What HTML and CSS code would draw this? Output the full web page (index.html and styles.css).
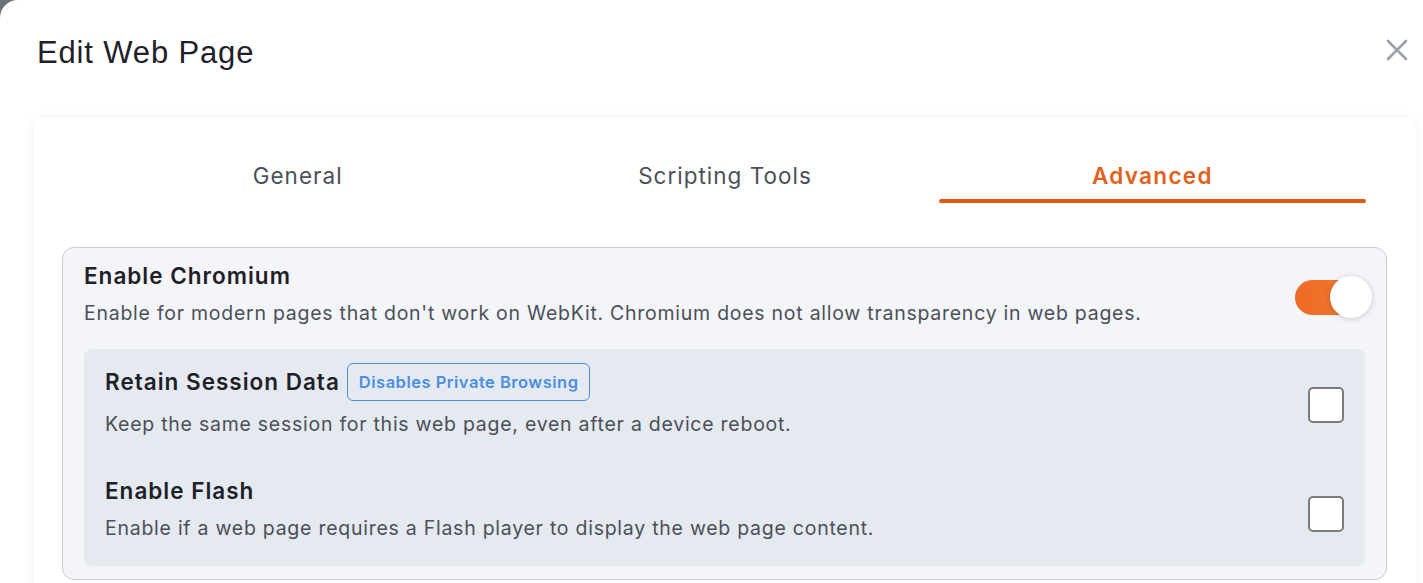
FILE: index.html
```html
<!DOCTYPE html>
<html lang="en">
<head>
    <meta charset="UTF-8">
    <meta name="viewport" content="width=device-width, initial-scale=1.0">
    <title>Edit Web Page</title>
    <link rel="stylesheet" href="styles.css">
</head>
<body>
    <div class="dialog">
        <div class="dialog-header">
            <h1>Edit Web Page</h1>
            <button class="close-btn" aria-label="Close">
                <svg width="22" height="22" viewBox="0 0 22 22">
                    <path d="M2 2 L20 20 M20 2 L2 20" stroke="#9aa1ab" stroke-width="2.6" stroke-linecap="round"/>
                </svg>
            </button>
        </div>

        <div class="card">
            <div class="tabs">
                <div class="tab">General</div>
                <div class="tab">Scripting Tools</div>
                <div class="tab active">Advanced</div>
            </div>

            <div class="panel">
                <div class="setting main-setting">
                    <div class="setting-text">
                        <div class="setting-title">Enable Chromium</div>
                        <div class="setting-desc">Enable for modern pages that don't work on WebKit. Chromium does not allow transparency in web pages.</div>
                    </div>
                    <div class="toggle on">
                        <span class="track"></span>
                        <span class="knob"></span>
                    </div>
                </div>

                <div class="sub-settings">
                    <div class="setting">
                        <div class="setting-text">
                            <div class="setting-title">Retain Session Data <span class="badge">Disables Private Browsing</span></div>
                            <div class="setting-desc">Keep the same session for this web page, even after a device reboot.</div>
                        </div>
                        <span class="checkbox"></span>
                    </div>
                    <div class="setting">
                        <div class="setting-text">
                            <div class="setting-title">Enable Flash</div>
                            <div class="setting-desc">Enable if a web page requires a Flash player to display the web page content.</div>
                        </div>
                        <span class="checkbox"></span>
                    </div>
                </div>
            </div>
        </div>
    </div>
</body>
</html>
```

FILE: styles.css
```css
body {
    margin: 0;
    background-color: #6f7277;
    font-family: Inter, "Noto Sans", sans-serif;
    overflow: hidden;
}
.dialog {
    background-color: white;
    border-top-left-radius: 18px;
    height: 583px;
    padding: 0 7px 0 33px;
}
.dialog-header {
    display: flex;
    align-items: center;
    justify-content: space-between;
    height: 104px;
    padding-left: 4px;
}
.dialog-header h1 {
    margin: 0;
    font-family: "Liberation Sans", Arial, sans-serif;
    font-weight: normal;
    font-size: 31px;
    letter-spacing: 0.85px;
    color: #1f2029;
    padding-top: 2px;
}
.close-btn {
    background: none;
    border: none;
    padding: 0;
    margin-right: 8px;
    margin-bottom: 4px;
    cursor: pointer;
    display: flex;
}
.card {
    margin-top: 14px;
    background-color: white;
    border-radius: 12px;
    box-shadow: 0 0 14px rgba(0,0,0,0.05);
    padding: 44px 29px 0;
    height: 500px;
}
.tabs {
    display: grid;
    grid-template-columns: repeat(3, 1fr);
    margin: 0 21px 0 22px;
}
.tab {
    position: relative;
    text-align: center;
    font-size: 22.5px;
    letter-spacing: 1px;
    line-height: 28px;
    color: #4b5058;
    padding-bottom: 13px;
}
.tab.active {
    color: #e2601a;
    font-weight: 600;
    letter-spacing: 1.3px;
}
.tab.active::after {
    content: "";
    position: absolute;
    left: 0;
    right: 0;
    bottom: 0;
    height: 4px;
    border-radius: 2px;
    background-color: #e05a14;
}
.panel {
    margin-top: 44px;
    background-color: #f4f5f9;
    border: 1px solid #c9ccd3;
    border-radius: 12px;
    padding: 14px 21px 13px;
}
.setting {
    display: flex;
    align-items: center;
    justify-content: space-between;
}
.setting-title {
    display: flex;
    align-items: center;
    font-size: 22.5px;
    letter-spacing: 1px;
    line-height: 28px;
    font-weight: 600;
    color: #1f2128;
}
.setting-desc {
    font-size: 19.5px;
    letter-spacing: 0.74px;
    line-height: 24px;
    color: #4b5058;
    margin-top: 11px;
}
.main-setting {
    margin-bottom: 24px;
}
.toggle {
    position: relative;
    width: 77px;
    height: 42px;
    margin-right: -7px;
    margin-top: 6px;
}
.toggle .track {
    position: absolute;
    left: 0;
    top: 4px;
    width: 70px;
    height: 35px;
    border-radius: 18px;
    background: linear-gradient(90deg, #ee6a27, #f07a30);
}
.toggle .knob {
    position: absolute;
    right: 0;
    top: 0;
    width: 42px;
    height: 42px;
    border-radius: 50%;
    background-color: white;
    box-shadow: 0 1px 6px rgba(0,0,0,0.18);
}
.sub-settings {
    background-color: #e5e9f0;
    border-radius: 8px;
    padding: 14px 21px 26px 21px;
}
.sub-settings .setting + .setting {
    margin-top: 41px;
}
.badge {
    margin-left: 7px;
    border: 1px solid #4a8fe2;
    border-radius: 6px;
    color: #4a8fe0;
    font-size: 16.5px;
    letter-spacing: 0.5px;
    line-height: 22px;
    font-weight: 600;
    padding: 7px 11px;
}
.checkbox {
    width: 32px;
    height: 32px;
    border: 2px solid #7b7b7b;
    border-radius: 5px;
    background-color: white;
    margin-top: 10px;
}
```
